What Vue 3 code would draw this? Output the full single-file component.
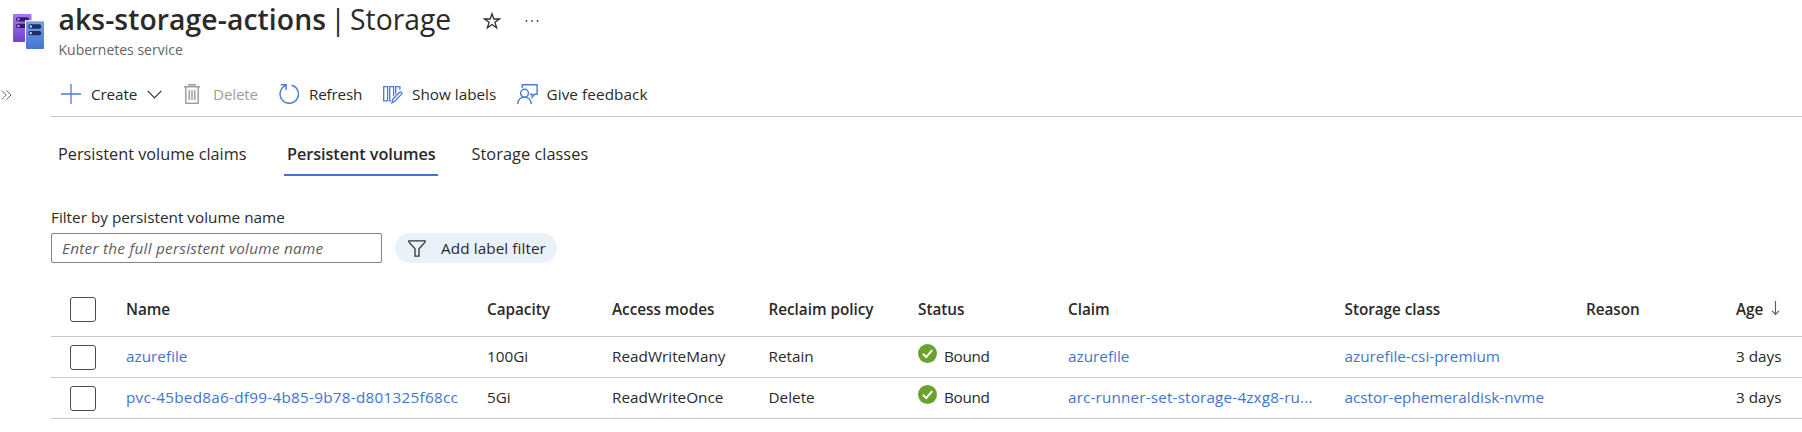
<script setup>
const tabs = [
  { label: 'Persistent volume claims', cls: 'tab-claims' },
  { label: 'Persistent volumes', cls: 'tab-volumes active' },
  { label: 'Storage classes', cls: 'tab-classes' },
]
const volumes = [
  { name: 'azurefile', capacity: '100Gi', modes: 'ReadWriteMany', policy: 'Retain', status: 'Bound', claim: 'azurefile', cls: 'azurefile-csi-premium', age: '3 days' },
  { name: 'pvc-45bed8a6-df99-4b85-9b78-d801325f68cc', capacity: '5Gi', modes: 'ReadWriteOnce', policy: 'Delete', status: 'Bound', claim: 'arc-runner-set-storage-4zxg8-ru...', cls: 'acstor-ephemeraldisk-nvme', age: '3 days' },
]
</script>

<template>
  <main class="page">
    <header class="head">
      <svg class="logo" width="32" height="36" viewBox="0 0 32 36">
        <defs>
          <linearGradient id="purple" x1="0" y1="0" x2="0" y2="1"><stop offset="0" stop-color="#a67af4" /><stop offset="1" stop-color="#7341cf" /></linearGradient>
          <linearGradient id="blue" x1="0" y1="0" x2="0" y2="1"><stop offset="0" stop-color="#76a0ea" /><stop offset="1" stop-color="#4674cf" /></linearGradient>
        </defs>
        <rect x="0" y="0" width="18.5" height="28" rx="0.8" fill="url(#purple)" />
        <rect x="3" y="3.2" width="13" height="4.2" rx="2.1" fill="#341a6e" />
        <rect x="3" y="9.8" width="13" height="4.2" rx="2.1" fill="#341a6e" />
        <circle cx="5.5" cy="5.3" r="1.1" fill="#d9c5fb" /><circle cx="5.5" cy="11.9" r="1.1" fill="#d9c5fb" />
        <rect x="12" y="6.2" width="20" height="30" fill="#fff" />
        <rect x="13" y="7.2" width="18" height="27.8" rx="0.8" fill="url(#blue)" />
        <rect x="15.3" y="10.3" width="13" height="4.4" rx="2.2" fill="#1d2f60" />
        <rect x="15.3" y="16.9" width="13" height="4.4" rx="2.2" fill="#1d2f60" />
        <circle cx="17.8" cy="12.5" r="1.2" fill="#c5dcfb" /><circle cx="17.8" cy="19.1" r="1.2" fill="#c5dcfb" />
      </svg>
      <div class="heading">
        <h1><strong>aks-storage-actions</strong><span class="bar">|</span><span>Storage</span></h1>
        <p>Kubernetes service</p>
      </div>
      <svg class="star" width="18" height="18" viewBox="0 0 18 18" fill="none" stroke="#333" stroke-width="1.3"><path d="M9 1.7 10.8 7h5.6l-4.5 3.3 1.7 5.5L9 12.5l-4.6 3.3 1.7-5.5L1.6 7h5.6z" /></svg>
      <svg class="dots" width="14" height="4" viewBox="0 0 14 4" fill="#444"><circle cx="1.5" cy="2" r=".9" /><circle cx="7" cy="2" r=".9" /><circle cx="12.5" cy="2" r=".9" /></svg>
    </header>

    <div class="commands">
      <svg class="expand" width="11" height="12" viewBox="0 0 11 12" fill="none" stroke="#666" stroke-width="1"><path d="M.8 1.5 5.2 6 .8 10.5M5.6 1.500 10 6l-4.400 4.500" /></svg>
      <div class="toolbar">
        <button class="cmd create">
          <svg width="20" height="20" viewBox="0 0 20 20" fill="none" stroke="#4b7bd3" stroke-width="1.3"><path d="M10 0v20M0 10h20" /></svg>
          <span>Create</span>
          <svg class="chev" width="15" height="9" viewBox="0 0 15 9" fill="none" stroke="#333" stroke-width="1.2"><path d="m.7.8 6.800 7 6.800-7" /></svg>
        </button>
        <button class="cmd delete">
          <svg width="16" height="20" viewBox="0 0 16 20" fill="none" stroke="#a19f9d" stroke-width="1.5"><path d="M0 2.8h16M5 2.5V.8h6v1.700M1.800 3v16.200h12.400V3" /><path d="M5.200 6v10.200M8 6v10.200M10.800 6v10.200" /></svg>
          <span>Delete</span>
        </button>
        <button class="cmd refresh">
          <svg width="20" height="20" viewBox="0 0 20 20" fill="none" stroke="#4b7bd3" stroke-width="1.4"><path d="M12.600 1.200A9.200 9.200 0 1 1 6.500 1.700M1.800.8h5.300v5.300" /></svg>
          <span>Refresh</span>
        </button>
        <button class="cmd labels">
          <svg width="20" height="20" viewBox="0 0 20 20" fill="none" stroke="#4b7bd3" stroke-width="1.300"><path d="M.7 2.700h3.900v14.100H.7zM10.600 12.300V2.700H6.700v14.100h1.600M12.700 10.200V2.700h4.200v3" /><path d="m9 18.900.9-3.700 6.700-6.900c1.400-1.200 3 .5 1.900 1.900l-6.700 7.100z" /></svg>
          <span>Show labels</span>
        </button>
        <button class="cmd feedback">
          <svg width="21" height="20" viewBox="0 0 21 20" fill="none" stroke="#4b7bd3" stroke-width="1.4"><path d="M5.200 4V.7h14.900v9.600h-2.400l-2.600 2.800v-2.800h-2" /><circle cx="7.500" cy="9.200" r="3.900" /><path d="M.7 20c.4-4.200 3-6.900 6.800-6.900s6.400 2.700 6.800 6.900" /></svg>
          <span>Give feedback</span>
        </button>
      </div>
    </div>

    <nav class="tabs">
      <a v-for="t in tabs" :key="t.label" class="tab" :class="t.cls">{{ t.label }}</a>
    </nav>

    <section class="filters">
      <label for="volume-name">Filter by persistent volume name</label>
      <div class="filter-row">
        <input id="volume-name" placeholder="Enter the full persistent volume name">
        <button class="pill">
          <svg width="18" height="17" viewBox="0 0 18 17" fill="none" stroke="#333" stroke-width="1.300"><path d="M.9.9h16.200v1.200L11 8.800v7.300H7V8.800L.9 2.100z" /></svg>
          <span>Add label filter</span>
        </button>
      </div>
    </section>

    <section class="table">
      <div class="row header">
        <span class="box" />
        <span>Name</span><span>Capacity</span><span>Access modes</span><span>Reclaim policy</span><span>Status</span><span>Claim</span><span>Storage class</span><span>Reason</span>
        <span class="age">Age<svg width="9" height="15" viewBox="0 0 9 15" fill="none" stroke="#5b5370" stroke-width="1.100"><path d="M4.500 0v13M1 9.800l3.500 3.700L8 9.800" /></svg></span>
      </div>
      <div v-for="v in volumes" :key="v.name" class="row">
        <span class="box" />
        <a :class="{ long: v.name.length > 20 }">{{ v.name }}</a>
        <span>{{ v.capacity }}</span>
        <span>{{ v.modes }}</span>
        <span>{{ v.policy }}</span>
        <span class="status">
          <svg width="19" height="19" viewBox="0 0 19 19"><circle cx="9.500" cy="9.500" r="9.500" fill="#6aa22d" /><path d="m4.900 9.700 3.300 3.400 6-7" fill="none" stroke="#fff" stroke-width="2" /></svg>
          <span>{{ v.status }}</span>
        </span>
        <a :class="{ claim: v.claim.length > 20 }">{{ v.claim }}</a>
        <a>{{ v.cls }}</a>
        <span />
        <span>{{ v.age }}</span>
      </div>
    </section>
  </main>
</template>

<style>
body { margin: 0; background: #fff; }
</style>

<style scoped>
* { box-sizing: border-box; }
.page { width: 1802px; height: 432px; overflow: hidden; background: #fff; color: #2b2a29; font: 15.3px/20px "Open Sans", "Noto Sans", sans-serif; }
svg { display: block; flex: none; }
button { border: 0; padding: 0; background: none; color: inherit; font: inherit; letter-spacing: inherit; }
.head { display: flex; align-items: flex-start; height: 79px; padding-left: 13px; }
.logo { margin: 14px 13.5px 0 0; }
.heading { width: 424.5px; white-space: nowrap; }
h1 { display: flex; margin: 0; font-size: 28.3px; font-weight: 400; line-height: 38px; }
h1 strong { font-weight: 600; letter-spacing: .08px; }
.bar { width: 24px; text-align: center; }
.heading p { margin: 2px 0 0; font-size: 14px; line-height: 20px; color: #666462; }
.star { margin-top: 12px; }
.dots { margin: 19px 0 0 23.5px; }
.commands { display: flex; height: 38px; }
.expand { margin: 10px 0 0 1px; }
.toolbar { display: flex; flex: 1; margin-left: 39px; padding: 0 0 7px 10px; border-bottom: 1px solid #c8c6c4; }
.cmd { display: flex; align-items: center; height: 30px; white-space: nowrap; }
.cmd span { margin-left: 10px; }
.create { width: 123px; letter-spacing: -.15px; }
.create .chev { margin-left: 10px; }
.delete { width: 95px; color: #a19f9d; letter-spacing: -.2px; }
.delete span { margin-left: 13px; }
.refresh { width: 104px; letter-spacing: -.22px; }
.labels { width: 134px; }
.labels span { margin-left: 9px; }
.feedback { letter-spacing: .08px; }
.feedback span { margin-left: 8.5px; }
.tabs { display: flex; height: 84px; padding: 22px 0 0 58px; font-size: 16.3px; line-height: 30px; white-space: nowrap; }
.tab { height: 37px; }
.tab-claims { width: 226px; }
.tab-volumes { width: 154px; margin-right: 33.5px; padding-left: 3px; border-bottom: 2px solid #4374cf; font-weight: 600; letter-spacing: -.08px; }
.tab-classes { letter-spacing: .06px; }
.filters { height: 79px; padding: 6px 0 0 51px; }
.filters label { display: block; height: 26px; }
.filter-row { display: flex; gap: 13px; }
input { width: 331px; height: 30px; padding: 0 0 0 10px; border: 1px solid #84827f; border-radius: 2px; background: #fff; font: 15.3px "Open Sans", "Noto Sans", sans-serif; outline: 0; }
input::placeholder { color: #605e5c; opacity: 1; font-style: italic; letter-spacing: .26px; }
.pill { display: flex; align-items: center; width: 162px; height: 30px; padding-left: 13px; border-radius: 15px; background: #e9f1fa; letter-spacing: .08px; white-space: nowrap; }
.pill span { margin-left: 15px; }
.table { margin-left: 51px; }
.row { display: grid; grid-template-columns: 56px 361px 125px 156.5px 149.5px 150px 276.5px 241.5px 150px auto; align-items: center; height: 41px; padding: 0 0 2px 19px; border-bottom: 1px solid #c8c6c4; white-space: nowrap; }
.row.header { height: 57px; padding: 2px 0 0 19px; font-weight: 600; letter-spacing: -.03px; }
.box { width: 26px; height: 25px; border: 1px solid #4d4b4a; border-radius: 3px; }
.row:not(.header) .box { margin-top: 2px; }
.row a { color: #4374cf; }
.long { letter-spacing: .25px; }
.claim { letter-spacing: .15px; }
.status { display: flex; align-items: center; letter-spacing: -.35px; }
.status svg { margin: 0 7px 6px 0; }
.age { display: flex; align-items: center; }
.age svg { margin: 0 0 2px 8px; }
</style>
